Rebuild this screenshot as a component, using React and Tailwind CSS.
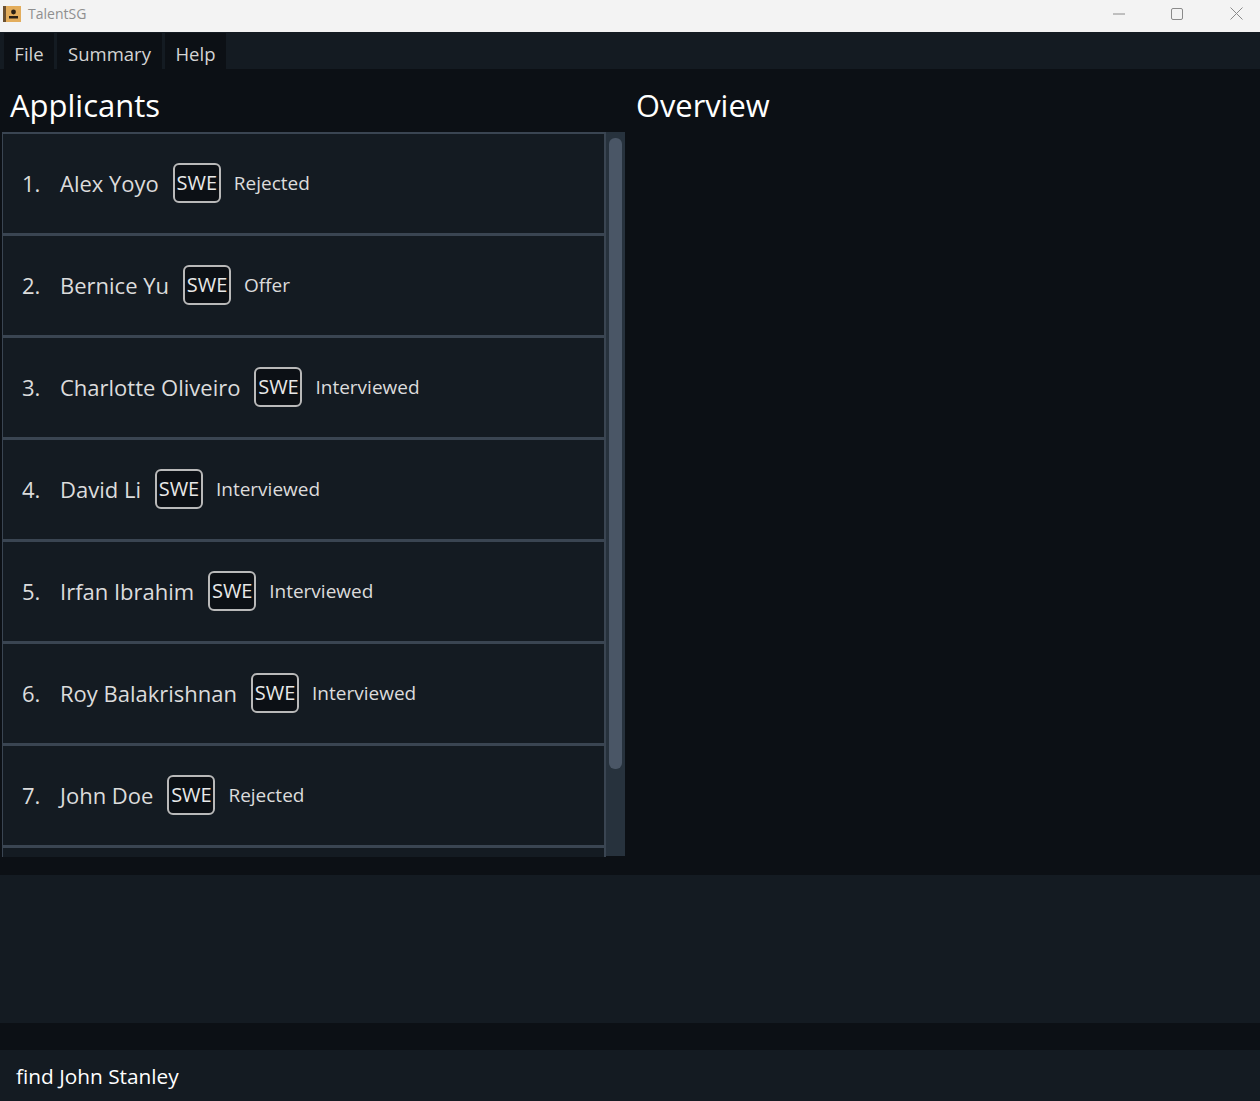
const applicants = [
    { name: "Alex Yoyo", status: "Rejected" },
    { name: "Bernice Yu", status: "Offer" },
    { name: "Charlotte Oliveiro", status: "Interviewed" },
    { name: "David Li", status: "Interviewed" },
    { name: "Irfan Ibrahim", status: "Interviewed" },
    { name: "Roy Balakrishnan", status: "Interviewed" },
    { name: "John Doe", status: "Rejected" },
];

const AppIcon = () => (
    <svg width="18" height="16" viewBox="0 0 18 16" className="ml-[3px]">
        <rect x="0" y="0" width="18" height="16" fill="#e3ad5c" />
        <rect x="0" y="0" width="3" height="16" fill="#6b5030" />
        <circle cx="10.5" cy="6" r="2.4" fill="#2a2015" />
        <rect x="6" y="10" width="9" height="2.5" fill="#2a2015" />
    </svg>
);

const TitleBar = () => (
    <div className="h-8 bg-[#f3f3f3] flex items-center pb-[5px] shrink-0">
        <AppIcon />
        <span className="ml-[7px] text-sm text-[#8f8f8f]">TalentSG</span>
        <div className="ml-auto flex items-center">
            <svg width="12" height="12" viewBox="0 0 12 12" className="mr-[46px]">
                <path d="M0 6h12" stroke="#8a8a8a" strokeWidth="1" />
            </svg>
            <svg width="12" height="12" viewBox="0 0 12 12" className="mr-[47px]">
                <rect x="0.5" y="0.5" width="11" height="11" rx="1.5" fill="none" stroke="#8a8a8a" />
            </svg>
            <svg width="13" height="13" viewBox="0 0 13 13" className="mr-[17px]">
                <path d="M0.5 0.5l12 12M12.5 0.5l-12 12" stroke="#8a8a8a" strokeWidth="1" />
            </svg>
        </div>
    </div>
);

const MenuBar = () => (
    <div className="h-[37px] bg-[#141b22] flex items-stretch gap-[3px] pt-[1px] pl-[4px] shrink-0 text-[#d4d4d4] text-[18.5px]">
        <div className="w-[50px] bg-[#0c1015] flex items-center justify-center pt-[6px]">File</div>
        <div className="w-[105px] bg-[#0c1015] flex items-center justify-center pt-[6px]">Summary</div>
        <div className="w-[61px] bg-[#0c1015] flex items-center justify-center pt-[6px]">Help</div>
    </div>
);

const ApplicantRow = ({ index, name, status }) => (
    <div className="h-[102px] shrink-0 border-b-[3px] border-[#3a4552] flex items-center pl-[19px] text-[#dcdcdc]">
        <span className="w-[38px] text-[22px]">{index}.</span>
        <span className="text-[22px]">{name}</span>
        <span className="ml-[14px] mb-[1px] w-[48px] h-[40px] rounded-md border-2 border-[#b9b9b9] bg-[#0c1015] flex items-center justify-center text-xl text-[#e8e8e8]">
            SWE
        </span>
        <span className="ml-[13px] mb-[1px] text-[19px]">{status}</span>
    </div>
);

const App = () => {
    return (
        <div
            className="w-[1260px] h-[1101px] overflow-hidden bg-[#0c1015] flex flex-col"
            style={{ fontFamily: '"Open Sans", "Noto Sans", sans-serif' }}
        >
            <TitleBar />
            <MenuBar />
            <div className="h-[788px] shrink-0 flex">
                <div className="w-[625px] pl-[2px] flex flex-col">
                    <h1 className="h-[63px] pl-[8px] pt-[14px] text-[31px] leading-[44px] text-white">Applicants</h1>
                    <div className="h-[725px] flex">
                        <div className="w-[604px] border-l border-r-2 border-t-2 border-[#3a4552] bg-[#141b22] flex flex-col overflow-hidden">
                            {applicants.map((a, i) => (
                                <ApplicantRow key={a.name} index={i + 1} name={a.name} status={a.status} />
                            ))}
                        </div>
                        <div className="w-[19px] mb-[1px] bg-[#27323d] pt-[6px] pl-[3px]">
                            <div className="w-[13px] h-[631px] rounded-md bg-[#4a5666]" />
                        </div>
                    </div>
                </div>
                <h1 className="pl-[11px] pt-[14px] text-[30.8px] leading-[44px] text-white">Overview</h1>
            </div>
            <div className="mt-[18px] h-[148px] bg-[#141b22] shrink-0" />
            <div className="mt-[27px] h-[51px] bg-[#141b22] shrink-0 flex items-center pl-[16px] pt-[2px] text-[20.8px] text-white">
                find John Stanley
            </div>
        </div>
    );
};

export default App;
